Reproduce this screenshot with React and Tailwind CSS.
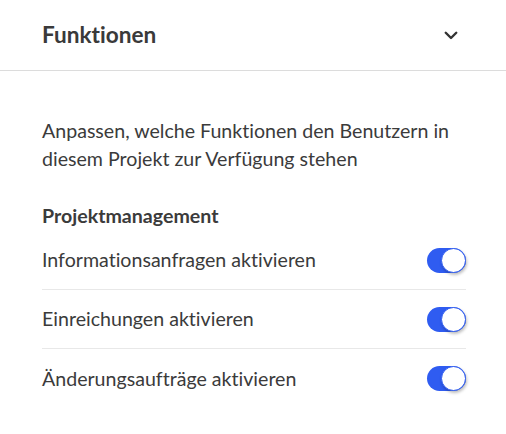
const ROWS = [
  'Informationsanfragen aktivieren',
  'Einreichungen aktivieren',
  'Änderungsaufträge aktivieren',
];

function Toggle() {
  return (
    <div className="relative w-[39px] h-[25px] rounded-full bg-[#2f5cf1] flex-shrink-0">
      <span className="absolute right-0 top-0 w-[25px] h-[25px] rounded-full bg-white border border-[#2f5cf1] shadow-[1px_2px_3px_rgba(0,0,0,0.25)]" />
    </div>
  );
}

export default function App() {
  return (
    <div
      className="w-[506px] h-[434px] bg-white text-[#3b3b3b] [font-variant-ligatures:none]"
      style={{ fontFamily: 'Lato, "Noto Sans", sans-serif' }}
    >
      <div className="h-[71px] px-[42px] flex items-center justify-between border-b border-[#dcdcdc]">
        <h2 className="text-[22.6px] font-bold text-[#3a3a3a]">Funktionen</h2>
        <svg className="w-[18px] h-[18px] mr-[4px]" fill="none" stroke="#333" viewBox="0 0 24 24">
          <path strokeLinecap="round" strokeLinejoin="round" strokeWidth={3.2} d="M5 9l7 7 7-7" />
        </svg>
      </div>

      <div className="pl-[42px] pr-[40px] pt-[46px]">
        <p className="text-[19.6px] leading-[28px]">
          Anpassen, welche Funktionen den Benutzern in diesem Projekt zur Verfügung stehen
        </p>
        <h3 className="mt-[31px] text-[19.6px] leading-[24px] font-bold">Projektmanagement</h3>
        <div className="mt-[3px]">
          {ROWS.map((label, i) => (
            <div
              key={label}
              className={`h-[59px] flex items-center justify-between ${
                i < ROWS.length - 1 ? 'border-b border-[#e8e8e8]' : ''
              }`}
            >
              <span className="text-[19.6px]">{label}</span>
              <Toggle />
            </div>
          ))}
        </div>
      </div>
    </div>
  );
}
